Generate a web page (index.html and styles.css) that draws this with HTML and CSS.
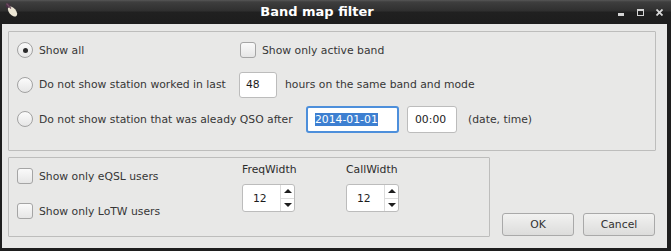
FILE: index.html
```html
<!DOCTYPE html>
<html>
<head>
<meta charset="utf-8">
<title>Band map filter</title>
<link rel="stylesheet" href="styles.css">
</head>
<body>
<div class="window">
  <div class="titlebar">
    <div class="tb-icon">
      <svg width="16" height="18" viewBox="0 0 16 18">
        <ellipse cx="9.5" cy="10.5" rx="3.4" ry="6" transform="rotate(-40 9.5 10.5)" fill="#ece6d4"/>
        <ellipse cx="5" cy="4.5" rx="2.4" ry="2.2" fill="#4a2f45"/>
        <path d="M3.5 2.5 L8 7.5" stroke="#6d4d60" stroke-width="1.2"/>
      </svg>
    </div>
    <div class="tb-title">Band map filter</div>
    <div class="tb-controls">
      <span class="ctl ctl-min"></span>
      <span class="ctl ctl-max"></span>
      <svg class="ctl-close" width="7" height="7" viewBox="0 0 7 7"><path d="M0.5 0.5 L6.5 6.5 M6.5 0.5 L0.5 6.5" stroke="#d8d8d8" stroke-width="1.8"/></svg>
    </div>
  </div>
  <div class="content">
    <div class="group g1">
      <div class="row r1">
        <div class="opt lead"><span class="radio checked"></span><span>Show all</span></div>
        <div class="opt opt-shift"><span class="check"></span><span>Show only active band</span></div>
      </div>
      <div class="row r2">
        <div class="opt lead"><span class="radio"></span><span>Do not show station worked in last</span></div>
        <span class="field f48">48</span>
        <span class="txt">hours on the same band and mode</span>
      </div>
      <div class="row r3">
        <div class="opt lead3"><span class="radio"></span><span>Do not show station that was aleady QSO after</span></div>
        <span class="field fdate"><span class="sel">2014-01-01</span></span>
        <span class="field ftime">00:00</span>
        <span class="txt paren">(date, time)</span>
      </div>
    </div>
    <div class="bottom">
      <div class="group g2">
        <div class="col-checks">
          <div class="opt"><span class="check"></span><span>Show only eQSL users</span></div>
          <div class="opt"><span class="check"></span><span>Show only LoTW users</span></div>
        </div>
        <div class="col-spin">
          <div class="spin-label">FreqWidth</div>
          <div class="spin">
            <span class="spin-val">12</span>
            <span class="spin-btns"><span class="up"></span><span class="down"></span></span>
          </div>
        </div>
        <div class="col-spin">
          <div class="spin-label">CallWidth</div>
          <div class="spin">
            <span class="spin-val">12</span>
            <span class="spin-btns"><span class="up"></span><span class="down"></span></span>
          </div>
        </div>
      </div>
      <div class="buttons">
        <button class="btn">OK</button>
        <button class="btn">Cancel</button>
      </div>
    </div>
  </div>
</div>
</body>
</html>
```

FILE: styles.css
```css
* { box-sizing: border-box; }
html, body { margin: 0; padding: 0; background: #1e1e1e; }
.window {
  width: 671px;
  height: 251px;
  display: flex;
  flex-direction: column;
  font-family: "DejaVu Sans", sans-serif;
  font-size: 10.8px;
  color: #363636;
}
.titlebar {
  height: 24px;
  display: flex;
  align-items: center;
  background: linear-gradient(#575757 0px, #3e3e3e 2px, #2f2f2f 11px, #202020 12px, #1d1d1d 24px);
}
.tb-icon {
  width: 22px;
  height: 24px;
  padding: 1px 0 0 3px;
}
.tb-title {
  flex: 1;
  text-align: center;
  color: #ffffff;
  font-weight: bold;
  font-size: 13px;
  padding-bottom: 1px;
}
.tb-controls {
  width: 59px;
  height: 24px;
  display: flex;
  align-items: flex-start;
  padding-top: 9px;
  padding-left: 6px;
}
.ctl-min {
  width: 6px;
  height: 3px;
  margin-top: 4px;
  background: #d4d4d4;
}
.ctl-max {
  width: 7px;
  height: 7px;
  margin-left: 13px;
  border: 1.5px solid #d4d4d4;
  border-top-width: 2px;
}
.ctl-close {
  margin-left: 12px;
}
.content {
  flex: 1;
  background: #e8e8e7;
  border-left: 2px solid #1e1e1e;
  border-right: 4px solid #1e1e1e;
  border-bottom: 3px solid #1e1e1e;
  padding: 7px 11px 11px 6px;
  display: flex;
  flex-direction: column;
}
.group {
  border: 1px solid #bdbdbc;
  border-radius: 1px;
}
.g1 {
  width: 648px;
  height: 120px;
  padding: 1px 8px 0 8px;
  display: grid;
  grid-template-rows: 34px 35px 34px;
}
.row {
  display: flex;
  align-items: center;
}
.opt {
  display: flex;
  align-items: center;
  gap: 6px;
  white-space: nowrap;
}
.lead { width: 222px; }
.lead3 { width: 289px; }
.opt-shift { margin-left: 1px; }
.radio {
  width: 16px;
  height: 16px;
  border-radius: 50%;
  border: 1px solid #a2a2a2;
  background: linear-gradient(#fbfbfb, #e6e6e6);
  display: inline-flex;
  align-items: center;
  justify-content: center;
  flex: none;
}
.radio.checked::after {
  content: "";
  width: 5px;
  height: 5px;
  border-radius: 50%;
  background: #2a2a2a;
}
.check {
  width: 16px;
  height: 16px;
  border-radius: 3px;
  border: 1px solid #a5a5a5;
  background: linear-gradient(#fafafa, #e6e6e6);
  flex: none;
}
.field {
  display: inline-flex;
  align-items: center;
  background: #ffffff;
  border: 1px solid #bcbcbc;
  border-radius: 3px;
  color: #1c1c1c;
  white-space: nowrap;
}
.f48 {
  width: 38px;
  height: 26px;
  padding-left: 6px;
  margin-right: 8px;
}
.fdate {
  width: 93px;
  height: 27px;
  border: 2px solid #4d8fdb;
  padding-left: 7px;
  margin-right: 8px;
}
.sel {
  background: #3d7fd1;
  color: #ffffff;
  line-height: 13px;
}
.ftime {
  width: 50px;
  height: 27px;
  padding-left: 7px;
  margin-right: 11px;
}
.txt { white-space: nowrap; }
.bottom {
  display: flex;
  margin-top: 6px;
  flex: 1;
}
.g2 {
  width: 482px;
  height: 80px;
  padding: 0 8px;
  display: flex;
}
.col-checks {
  width: 225px;
  display: flex;
  flex-direction: column;
  gap: 19px;
  padding-top: 10px;
}
.col-checks .opt { height: 16px; }
.col-spin {
  width: 104px;
  display: flex;
  flex-direction: column;
  padding-top: 5px;
}
.spin-label {
  height: 14px;
  line-height: 14px;
  color: #2c2c2c;
  margin-bottom: 7px;
}
.spin {
  width: 53px;
  height: 28px;
  background: #ffffff;
  border: 1px solid #bcbcbc;
  border-radius: 3px;
  display: flex;
}
.spin-val {
  flex: 1;
  display: flex;
  align-items: center;
  padding-left: 10px;
  color: #1c1c1c;
}
.spin-btns {
  width: 14px;
  border-left: 1px solid #dcdcdc;
  display: flex;
  flex-direction: column;
}
.up, .down {
  flex: 1;
  display: flex;
  align-items: center;
  justify-content: center;
}
.up { border-bottom: 1px solid #dcdcdc; }
.up::after {
  content: "";
  border-left: 4px solid transparent;
  border-right: 4px solid transparent;
  border-bottom: 4px solid #1e1e1e;
}
.down::after {
  content: "";
  border-left: 4px solid transparent;
  border-right: 4px solid transparent;
  border-top: 4px solid #1e1e1e;
}
.buttons {
  margin-left: auto;
  margin-right: 1px;
  margin-bottom: 1px;
  display: flex;
  align-items: flex-end;
  gap: 9px;
}
.btn {
  width: 72px;
  height: 23px;
  font-family: "DejaVu Sans", sans-serif;
  font-size: 10.8px;
  color: #333333;
  background: linear-gradient(#f2f2f1, #dcdcdb);
  border: 1px solid #a9a9a9;
  border-radius: 3px;
  padding: 0;
}
```
